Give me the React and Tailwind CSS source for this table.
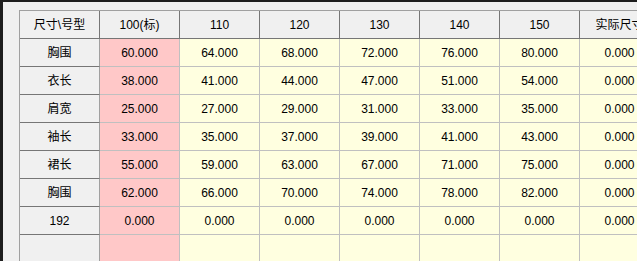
const headers = ['尺寸\\号型', '100(标)', '110', '120', '130', '140', '150', '实际尺寸']

const rows = [
  ['胸围', '60.000', '64.000', '68.000', '72.000', '76.000', '80.000', '0.000'],
  ['衣长', '38.000', '41.000', '44.000', '47.000', '51.000', '54.000', '0.000'],
  ['肩宽', '25.000', '27.000', '29.000', '31.000', '33.000', '35.000', '0.000'],
  ['袖长', '33.000', '35.000', '37.000', '39.000', '41.000', '43.000', '0.000'],
  ['裙长', '55.000', '59.000', '63.000', '67.000', '71.000', '75.000', '0.000'],
  ['胸围', '62.000', '66.000', '70.000', '74.000', '78.000', '82.000', '0.000'],
  ['192', '0.000', '0.000', '0.000', '0.000', '0.000', '0.000', '0.000'],
  ['', '', '', '', '', '', '', ''],
]

export default function App() {
  return (
    <div className="w-[637px] h-[261px] overflow-hidden bg-[#f0f0f0] border-t-2 border-l-[3px] border-[#1e1e1e] font-['Liberation_Sans','Noto_Sans_CJK_SC',sans-serif] text-[12px] text-black">
      <div className="ml-[16px] mt-[8px] w-max border-l border-t border-[#a0a0a0]">
        {/* header */}
        <div className="flex">
          {headers.map((h, i) => (
            <div
              key={i}
              className="w-[80px] h-[28px] shrink-0 flex items-center justify-center whitespace-nowrap bg-[#f0f0f0] border-r border-b border-[#767676]"
            >
              {h}
            </div>
          ))}
        </div>
        {rows.map((r, ri) => (
          <div key={ri} className="flex">
            {r.map((c, ci) => {
              let cls = 'bg-[#ffffe0] border-r border-b border-[#c0c0c0]'
              if (ci === 0) cls = 'bg-[#f0f0f0] border-r border-b border-r-[#a0a0a0] border-b-[#767676]'
              else if (ci === 1) cls = 'bg-[#ffc8c8] border-r border-b border-[#c0c0c0]'
              return (
                <div
                  key={ci}
                  className={`w-[80px] h-[28px] shrink-0 flex items-center justify-center whitespace-nowrap ${cls}`}
                >
                  {c}
                </div>
              )
            })}
          </div>
        ))}
      </div>
    </div>
  )
}
